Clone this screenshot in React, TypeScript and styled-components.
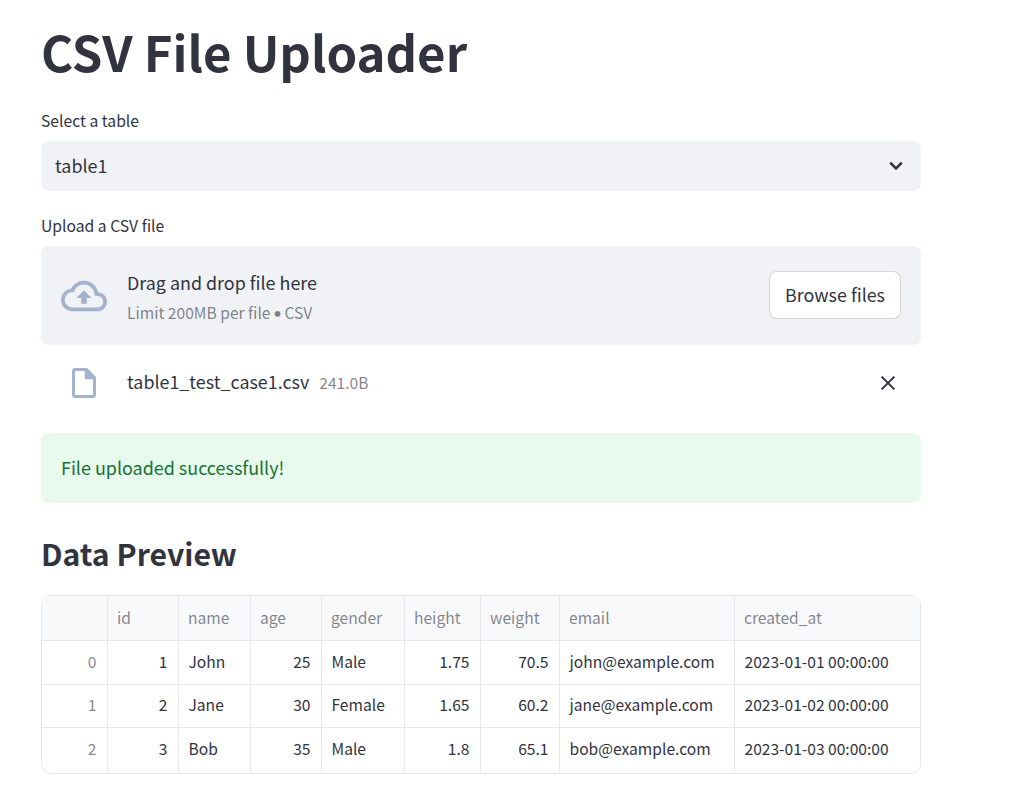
import React from "react";
import styled, { createGlobalStyle } from "styled-components";

const Global = createGlobalStyle`
  html, body { margin: 0; padding: 0; background: #fff; }
  body { font-family: "Noto Sans CJK SC", "Source Sans Pro", "Noto Sans", sans-serif; color: #31333f; }
`;

const Page = styled.main`
  width: 880px;
  padding: 0 0 0 41px;
  display: flex;
  flex-direction: column;
`;
const Title = styled.h1`
  margin: 0;
  padding-top: 21px;
  height: 60px;
  font-size: 49.1px;
  line-height: 60px;
  font-weight: 700;
  color: #31333f;
`;
const Label = styled.label<{ $top: number }>`
  display: block;
  margin-top: ${(p) => p.$top}px;
  height: 20px;
  font-size: 15.7px;
  line-height: 20px;
  color: #31333f;
`;
const Select = styled.div`
  margin-top: 10px;
  height: 50px;
  box-sizing: border-box;
  border-radius: 8px;
  background: #f0f2f6;
  display: flex;
  align-items: center;
  justify-content: space-between;
  padding: 0 17px 0 14px;
  font-size: 17.9px;
  line-height: 24px;
`;
const SelectValue = styled.span`
  padding-bottom: 2px;
`;
const Drop = styled.section`
  margin-top: 10px;
  height: 99px;
  box-sizing: border-box;
  border-radius: 8px;
  background: #f0f2f6;
  display: flex;
  align-items: center;
  padding: 0 20px;
`;
const IconSlot = styled.div`
  width: 46px;
  margin-right: 20px;
  display: flex;
  justify-content: center;
  flex: none;
`;
const DropText = styled.div`
  flex: 1;
  display: flex;
  flex-direction: column;
  gap: 8px;
  padding-top: 2px;
`;
const DropTitle = styled.div`
  font-size: 17.9px;
  line-height: 24px;
`;
const DropHint = styled.div`
  font-size: 15.6px;
  line-height: 20px;
  color: rgba(49, 51, 63, 0.6);
`;
const Bullet = styled.span`
  font-family: "Lato", sans-serif;
  margin: 0 -1px;
`;
const Browse = styled.button`
  width: 132px;
  height: 48px;
  margin-bottom: 1px;
  border: 1px solid rgba(49, 51, 63, 0.2);
  border-radius: 8px;
  background: #fff;
  color: #31333f;
  font: inherit;
  font-size: 17.9px;
  line-height: 24px;
  padding: 0 0 2px;
`;
const FileRow = styled.div`
  margin-top: 8px;
  height: 60px;
  display: flex;
  align-items: center;
  padding: 0 23px 0 20px;
`;
const FileName = styled.span`
  font-size: 17.9px;
  line-height: 24px;
  padding-bottom: 4px;
`;
const FileSize = styled.span`
  margin-left: 10px;
  flex: 1;
  font-size: 15.6px;
  line-height: 24px;
  padding-bottom: 2px;
  color: rgba(49, 51, 63, 0.6);
`;
const CloseIcon = styled.svg`
  margin-bottom: 1px;
`;
const Alert = styled.div`
  margin-top: 20px;
  height: 70px;
  box-sizing: border-box;
  border-radius: 8px;
  background: #e8f9ee;
  color: #177233;
  padding: 0 20px 2px;
  display: flex;
  align-items: center;
  font-size: 17.95px;
  line-height: 24px;
`;
const Heading = styled.h2`
  margin: 28px 0 0;
  height: 44px;
  font-size: 30.2px;
  line-height: 44px;
  font-weight: 700;
`;
const TableWrap = styled.div`
  margin-top: 20px;
  width: 880px;
  height: 179px;
  box-sizing: border-box;
  border: 1px solid #e6e8ec;
  border-radius: 10px;
  overflow: hidden;
`;
const Table = styled.table`
  border-collapse: separate;
  border-spacing: 0;
  table-layout: fixed;
  width: 878px;
  font-size: 15.6px;
`;
const Head = styled.th`
  height: 45px;
  box-sizing: border-box;
  padding: 0 9px 3px;
  background: #f8f9fb;
  border-right: 1px solid #e6e8ec;
  border-bottom: 1px solid #e6e8ec;
  font-weight: 400;
  text-align: left;
  color: rgba(49, 51, 63, 0.6);
  line-height: 20px;
  &:last-child { border-right: 0; }
`;
const Cell = styled.td<{ $num?: boolean; $index?: boolean; $last?: boolean }>`
  height: 43.6px;
  box-sizing: border-box;
  padding: 0 10.5px 3px 9.5px;
  border-right: 1px solid #e6e8ec;
  border-bottom: ${(p) => (p.$last ? "0" : "1px solid #e6e8ec")};
  text-align: ${(p) => (p.$num ? "right" : "left")};
  color: ${(p) => (p.$index ? "rgba(49, 51, 63, 0.6)" : "#31333f")};
  line-height: 20px;
  white-space: nowrap;
  &:last-child { border-right: 0; }
`;

const widths = [66, 71, 72, 71, 83, 76, 79, 175, 185];
const columns = ["", "id", "name", "age", "gender", "height", "weight", "email", "created_at"];
const rows = [
  ["1", "John", "25", "Male", "1.75", "70.5", "john@example.com", "2023-01-01 00:00:00"],
  ["2", "Jane", "30", "Female", "1.65", "60.2", "jane@example.com", "2023-01-02 00:00:00"],
  ["3", "Bob", "35", "Male", "1.8", "65.1", "bob@example.com", "2023-01-03 00:00:00"],
];
const numeric = new Set([0, 2, 4, 5]);

export default function App() {
  return (
    <Page>
      <Global />
      <Title>CSV File Uploader</Title>
      <Label $top={30}>Select a table</Label>
      <Select>
        <SelectValue>table1</SelectValue>
        <svg width="16" height="16" viewBox="0 0 16 16" fill="none" stroke="#31333f" strokeWidth="2.6">
          <path d="M2.2 4.6 8 10.4 13.8 4.6" />
        </svg>
      </Select>
      <Label $top={25}>Upload a CSV file</Label>
      <Drop>
        <IconSlot>
          <svg width="46" height="46" viewBox="0 0 24 24" fill="#a3b2cd">
            <path d="M19.35 10.04A7.49 7.49 0 0 0 12 4C9.11 4 6.6 5.64 5.35 8.04A5.994 5.994 0 0 0 0 14c0 3.31 2.69 6 6 6h13c2.76 0 5-2.24 5-5 0-2.64-2.05-4.78-4.65-4.96zM19 18H6c-2.21 0-4-1.79-4-4 0-2.05 1.53-3.76 3.56-3.97l1.07-.11.5-.95A5.469 5.469 0 0 1 12 6c2.62 0 4.88 1.86 5.39 4.43l.3 1.5 1.53.11A2.98 2.98 0 0 1 22 15c0 1.65-1.35 3-3 3zM8 13h2.55v3h2.9v-3H16l-4-4z" />
          </svg>
        </IconSlot>
        <DropText>
          <DropTitle>Drag and drop file here</DropTitle>
          <DropHint>Limit 200MB per file <Bullet>•</Bullet> CSV</DropHint>
        </DropText>
        <Browse type="button">Browse files</Browse>
      </Drop>
      <FileRow>
        <IconSlot>
          <svg width="36" height="36" viewBox="0 0 24 24" fill="#a3b2cd">
            <path d="M14 2H6c-1.1 0-2 .9-2 2v16c0 1.1.9 2 2 2h12c1.1 0 2-.9 2-2V8l-6-6zm4 18H6V4h6.5v5.5H18V20z" />
          </svg>
        </IconSlot>
        <FileName>table1_test_case1.csv</FileName>
        <FileSize>241.0B</FileSize>
        <CloseIcon width="20" height="20" viewBox="0 0 20 20" fill="none" stroke="#31333f" strokeWidth="2">
          <path d="M3.6 3.6 16.4 16.4M16.4 3.6 3.6 16.4" />
        </CloseIcon>
      </FileRow>
      <Alert>File uploaded successfully!</Alert>
      <Heading>Data Preview</Heading>
      <TableWrap>
        <Table>
          <colgroup>
            {widths.map((w, i) => (
              <col key={i} style={{ width: w }} />
            ))}
          </colgroup>
          <thead>
            <tr>
              {columns.map((c) => (
                <Head key={c}>{c}</Head>
              ))}
            </tr>
          </thead>
          <tbody>
            {rows.map((r, ri) => (
              <tr key={ri}>
                <Cell $num $index $last={ri === 2}>{ri}</Cell>
                {r.map((v, ci) => (
                  <Cell key={ci} $num={numeric.has(ci)} $last={ri === 2}>{v}</Cell>
                ))}
              </tr>
            ))}
          </tbody>
        </Table>
      </TableWrap>
    </Page>
  );
}
